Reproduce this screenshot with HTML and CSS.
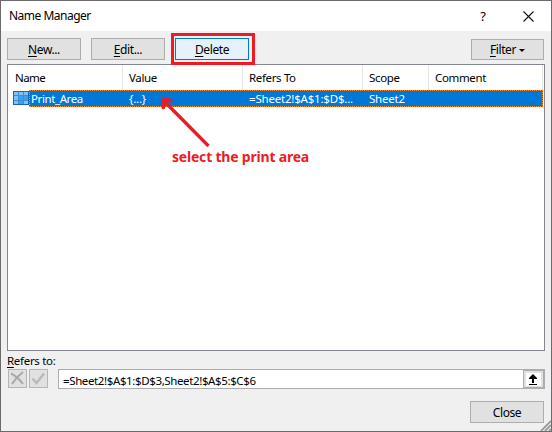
FILE: index.html
```html
<!DOCTYPE html>
<html lang="en">
<head>
<meta charset="utf-8">
<title>Name Manager</title>
<link rel="stylesheet" href="styles.css">
</head>
<body>
<main class="dialog">
  <header class="titlebar">
    <h1 class="title">Name Manager</h1>
    <span class="help">?</span>
    <svg class="dismiss" width="11" height="11" viewBox="0 0 11 11"><path d="M.5.5l10 10M10.5.5l-10 10" fill="none" stroke="#111" stroke-width="1.1"/></svg>
  </header>
  <div class="toolbar">
    <button class="btn"><span><u>N</u>ew...</span></button>
    <button class="btn"><span><u>E</u>dit...</span></button>
    <button class="btn focused"><span><u>D</u>elete</span></button>
    <button class="btn filter"><span><u>F</u>ilter</span><svg width="6" height="3" viewBox="0 0 6 3"><path d="M0 0h6L3 3z"/></svg></button>
  </div>
  <section class="list">
    <div class="columns head">
      <span class="name">Name</span><span>Value</span><span>Refers To</span><span>Scope</span><span>Comment</span>
    </div>
    <div class="row">
      <svg class="sheet" width="16" height="14" viewBox="0 0 16 14">
        <path fill="#1f66a5" d="M0 0h16v14H0z"/>
        <path fill="#3b8fd4" d="M1 1h14v12H1z"/>
        <path fill="#83c0f2" d="M1 1h4v3H1zM6 1h4v3H6zM11 1h4v3h-4zM1 5h4v4H1zM1 10h4v3H1zM11 10h4v3h-4z"/>
        <path fill="#3aa0f3" d="M6 5h4v4H6zM11 5h4v4h-4zM6 10h4v3H6z"/>
      </svg>
      <div class="columns selected">
        <span class="area">Print_Area</span><span>{...}</span><span class="formula">=Sheet2!$A$1:$D$...</span><span>Sheet2</span><span></span>
      </div>
    </div>
  </section>
  <label class="label" for="range"><u>R</u>efers to:</label>
  <div class="editor">
    <button class="small" aria-label="Cancel"><svg width="17" height="17" viewBox="0 0 17 17"><path d="M2 3.5C7 6 11 10 14 14M14 2C10 5 6 9 3 14" fill="none" stroke="#a9a9a9" stroke-width="2"/></svg></button>
    <button class="small" aria-label="Accept"><svg width="17" height="17" viewBox="0 0 17 17"><path d="M2.5 8.5l4 4.500L14 3.500" fill="none" stroke="#bababa" stroke-width="2.6"/></svg></button>
    <div class="field" id="range"><span>=Sheet2!$A$1:$D$3,Sheet2!$A$5:$C$6</span>
      <span class="collapse"><svg width="15" height="13" viewBox="0 0 15 13"><path fill="#fff" d="M0 0h15v13H0z"/><path d="M7 1l4 4v1H8v4H6V6H3V5zM3 11h8v1H3z"/></svg></span>
    </div>
  </div>
  <footer class="footer"><button class="btn close"><span>Close</span></button></footer>
  <svg class="grip" width="11" height="11" viewBox="0 0 11 11"><path d="M1 11L11 1M5 11l6-6M9 11l2-2" fill="none" stroke="#999" stroke-width="1.8"/></svg>
  <div class="mark"></div>
  <svg class="arrow" width="54" height="54" viewBox="0 0 54 54"><path d="M47.500 48L3 3" fill="none" stroke="#ed1c24" stroke-width="3.300"/><path d="M2.500 11L1.500 2L7 1.500L11 3.500" fill="none" stroke="#ed1c24" stroke-width="3.300" stroke-linejoin="round"/></svg>
  <p class="note">select the print area</p>
</main>
</body>
</html>
```
FILE: styles.css
```css
* { box-sizing: border-box; }
body { margin: 0; overflow: hidden; font: 11.5px/16px "Noto Sans", "Open Sans", sans-serif; color: #000; }
.dialog { position: relative; width: 552px; height: 432px; background: #f0f0f0; border: 1px solid #6b6b6d; display: flex; flex-direction: column; }
.titlebar { flex: none; height: 30px; padding: 0 14px 0 8px; background: #fff; display: flex; align-items: center; }
.title { margin: 0 auto 0 0; font-size: 12px; font-weight: 400; letter-spacing: -.5px; }
.help { font-size: 13px; margin-right: 37px; }
.dismiss { display: block; margin-right: 3px; }
.toolbar { flex: none; height: 33px; padding: 7px 7px 0 6px; display: flex; gap: 10px; }
.btn { width: 74px; height: 22px; padding: 1px 0 0; border: 1px solid #adadad; background: #e1e1e1; font: inherit; font-size: 12px; letter-spacing: -.4px; color: #000; display: flex; align-items: center; justify-content: center; }
u { text-decoration: underline; text-underline-offset: 2px; text-decoration-thickness: 1px; text-decoration-skip-ink: none; }
.focused { background: #e5f1fb; border-color: #0078d7; }
.filter { width: 73px; height: 21px; margin: 1px 0 0 auto; gap: 3px; }
.list { flex: none; width: 538px; height: 287px; margin-left: 6px; background: #fff; border: 1px solid #828790; }
.columns { display: grid; grid-template-columns: 115px 120px 120px 66px 114px; }
.head { height: 25px; line-height: 25px; letter-spacing: -.35px; }
.columns > span { padding-left: 6px; white-space: nowrap; overflow: hidden; }
.columns > .name { padding-left: 7px; letter-spacing: -.6px; }
.head span { border-right: 1px solid #e5e5e5; }
.row { display: flex; align-items: flex-start; height: 17px; padding-left: 5px; }
.sheet { flex: none; margin-top: 1px; }
.selected { width: 514px; height: 17px; line-height: 15px; background: #0078d7; color: #fff; grid-template-columns: 93px 120px 120px 66px 113px; letter-spacing: -.2px; border: 1px dotted #ff8728; }
.selected .area { padding-left: 1px; letter-spacing: -.4px; }
.label { flex: none; height: 18px; margin: 0 0 0 6px; line-height: 20px; letter-spacing: -.3px; }
.editor { flex: none; height: 20px; padding: 0 6px 0 7px; display: flex; gap: 2px; }
.small { width: 19px; height: 19px; padding: 0; border: 1px solid #b5b5b5; background: #e1e1e1; }
.small svg { display: block; }
.field { flex: 1; margin-left: 8px; height: 20px; padding-left: 4px; background: #fff; border: 1px solid #abadb3; line-height: 21px; display: flex; letter-spacing: -.38px; }
.collapse { width: 22px; height: 20px; margin: -1px -1px -1px auto; border: 2px solid #abadb3; border-left-width: 1px; background: #e1e1e1; display: flex; align-items: center; justify-content: center; }
.footer { padding: 12px 7px 0 0; display: flex; justify-content: flex-end; }
.grip { position: absolute; right: 0; bottom: 0; }
.mark { position: absolute; left: 170px; top: 32px; width: 84px; height: 32px; border: 3px solid #ed1c24; }
.arrow { position: absolute; left: 160px; top: 97px; }
.note { position: absolute; left: 171px; top: 147px; margin: 0; font-size: 14px; line-height: 18px; font-weight: 700; color: #ed1c24; white-space: nowrap; letter-spacing: -.2px; }
```
